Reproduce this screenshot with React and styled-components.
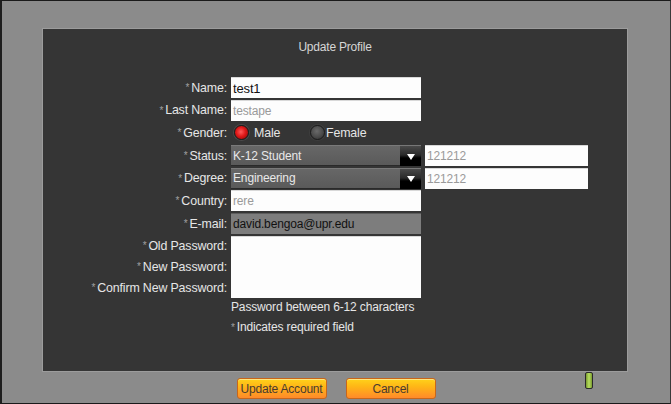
import React from 'react';
import styled, { createGlobalStyle } from 'styled-components';

const GlobalStyle = createGlobalStyle`
  html, body {
    margin: 0;
    padding: 0;
    background: #8b8b8b;
  }
  body {
    font-family: 'Liberation Sans', Arial, sans-serif;
  }
`;

const Frame = styled.div`
  position: relative;
  box-sizing: border-box;
  width: 671px;
  height: 404px;
  background: #8b8b8b;
  border-top: 1px solid #1a1a1a;
  border-left: 2px solid #1e1e1e;
  border-right: 1px solid #3a3a3a;
  border-bottom: 1px solid #1a1a1a;
  padding: 28px 43px 0 41px;
  display: flex;
  flex-direction: column;
`;

const Panel = styled.div`
  box-sizing: border-box;
  height: 342px;
  background: #353535;
  box-shadow: 0 0 0 1px #9c9c9c;
  display: flex;
  flex-direction: column;
`;

const Title = styled.div`
  text-align: center;
  color: #d6d6d6;
  font-size: 12px;
  letter-spacing: -0.2px;
  padding-top: 11px;
  height: 37px;
`;

const Form = styled.div`
  display: grid;
  grid-template-columns: 184px 190px 163px;
  grid-template-rows: repeat(7, 21px) repeat(3, 19.5px) 15px 22px;
  column-gap: 4px;
  row-gap: 1.7px;
  font-size: 12px;
  letter-spacing: -0.15px;
`;

const Label = styled.div`
  grid-column: 1;
  display: flex;
  align-items: center;
  justify-content: flex-end;
  color: #e6e6e6;
  font-size: 12.4px;
  white-space: nowrap;
`;

const Star = styled.span`
  color: #a0a0a0;
  font-size: 10px;
  margin-right: 2px;
`;

const Input = styled.div`
  box-sizing: border-box;
  grid-column: ${(p) => p.col || 2};
  display: flex;
  align-items: center;
  padding-left: 2px;
  background: ${(p) => (p.dim ? '#7d7d7d' : '#fdfdfd')};
  color: ${(p) => (p.muted ? '#9a9a9a' : '#111')};
  border-top: 1px solid ${(p) => (p.dim ? '#5c5c5c' : '#d8d8d8')};
  font-size: ${(p) => (p.big ? '13px' : '12px')};
  white-space: nowrap;
`;

const PasswordBox = styled.div`
  grid-column: 2;
  grid-row: 8 / span 3;
  background: #fdfdfd;
  border-top: 1px solid #d8d8d8;
`;

const Select = styled.div`
  grid-column: 2;
  display: flex;
  box-sizing: border-box;
`;

const SelectValue = styled.div`
  flex: 1;
  display: flex;
  align-items: center;
  padding-left: 2px;
  color: #e8e8e8;
  background: linear-gradient(#676767, #5a5a5a);
  border-top: 1px solid #7a7a7a;
  border-bottom: 1px solid #2a2a2a;
`;

const ArrowButton = styled.div`
  width: 21px;
  display: flex;
  align-items: center;
  justify-content: center;
  background: linear-gradient(#4a4a4a 0%, #2a2a2a 45%, #000 60%, #000 100%);
  border-top: 1px solid #777;

  &::after {
    content: '';
    width: 0;
    height: 0;
    border-left: 4px solid transparent;
    border-right: 4px solid transparent;
    border-top: 6px solid #fff;
    margin-top: 1px;
  }
`;

const RadioRow = styled.div`
  grid-column: 2 / span 2;
  display: flex;
  align-items: center;
  color: #e6e6e6;
  font-size: 12.4px;
  padding-left: 3px;
`;

const RadioOption = styled.label`
  display: flex;
  align-items: center;
  width: ${(p) => p.w || 'auto'};
`;

const RadioDot = styled.span`
  width: 15px;
  height: 15px;
  border-radius: 50%;
  margin-right: ${(p) => (p.on ? '5px' : '1px')};
  box-sizing: border-box;
  border: 1px solid #1c1c1c;
  background: ${(p) =>
    p.on
      ? 'radial-gradient(circle at 45% 45%, #ff5a5a 0%, #e01818 45%, #7a0606 100%)'
      : 'radial-gradient(circle at 45% 40%, #6a6a6a 0%, #4a4a4a 55%, #2a2a2a 100%)'};
  box-shadow: 0 0 0 1px ${(p) => (p.on ? '#4a4a4a' : '#3e3e3e')};
`;

const Note = styled.div`
  grid-column: 2 / span 2;
  display: flex;
  align-items: center;
  color: #e6e6e6;
  white-space: nowrap;
`;

const Footer = styled.div`
  position: relative;
  flex: 1;
  display: flex;
  justify-content: center;
  align-items: flex-start;
  gap: 19px;
  padding-top: 7px;
  margin-left: -41px;
  margin-right: -43px;
`;

const OrangeButton = styled.button`
  width: 90px;
  height: 21px;
  padding: 0;
  border: 1px solid #c8661a;
  border-radius: 3px;
  background: linear-gradient(#ffd21a 0%, #ffb616 40%, #ff8a2a 100%);
  color: #4a3a30;
  font-family: 'Liberation Sans', Arial, sans-serif;
  font-size: 12px;
  letter-spacing: -0.2px;
  box-shadow: inset 0 1px 0 #ffe680;
`;

const Led = styled.span`
  position: absolute;
  right: 77px;
  top: 1px;
  width: 6px;
  height: 15px;
  border: 1px solid #2a2a2a;
  border-radius: 2px;
  background: linear-gradient(90deg, #7a9a30, #b8e060 50%, #7a9a30);
`;

const rows = [
  { label: 'Name:', kind: 'input', value: 'test1', big: true },
  { label: 'Last Name:', kind: 'input', value: 'testape', muted: true },
  { label: 'Gender:', kind: 'radio' },
  { label: 'Status:', kind: 'select', value: 'K-12 Student', extra: '121212' },
  { label: 'Degree:', kind: 'select', value: 'Engineering', extra: '121212' },
  { label: 'Country:', kind: 'input', value: 'rere', muted: true },
  { label: 'E-mail:', kind: 'input', value: 'david.bengoa@upr.edu', dim: true },
];

const App = () => {
  return (
    <>
      <GlobalStyle />
      <Frame>
        <Panel>
          <Title>Update Profile</Title>
          <Form>
            {rows.map((r) => (
              <React.Fragment key={r.label}>
                <Label>
                  <Star>*</Star>
                  {r.label}
                </Label>
                {r.kind === 'input' && (
                  <Input muted={r.muted} dim={r.dim} big={r.big}>
                    {r.value}
                  </Input>
                )}
                {r.kind === 'radio' && (
                  <RadioRow>
                    <RadioOption w="76px">
                      <RadioDot on />
                      Male
                    </RadioOption>
                    <RadioOption>
                      <RadioDot />
                      Female
                    </RadioOption>
                  </RadioRow>
                )}
                {r.kind === 'select' && (
                  <>
                    <Select>
                      <SelectValue>{r.value}</SelectValue>
                      <ArrowButton />
                    </Select>
                    <Input col={3} muted>
                      {r.extra}
                    </Input>
                  </>
                )}
              </React.Fragment>
            ))}
            <Label>
              <Star>*</Star>Old Password:
            </Label>
            <PasswordBox />
            <Label>
              <Star>*</Star>New Password:
            </Label>
            <Label>
              <Star>*</Star>Confirm New Password:
            </Label>
            <Note>Password between 6-12 characters</Note>
            <Note>
              <Star>*</Star>Indicates required field
            </Note>
          </Form>
        </Panel>
        <Footer>
          <OrangeButton>Update Account</OrangeButton>
          <OrangeButton>Cancel</OrangeButton>
          <Led />
        </Footer>
      </Frame>
    </>
  );
};

export default App;
